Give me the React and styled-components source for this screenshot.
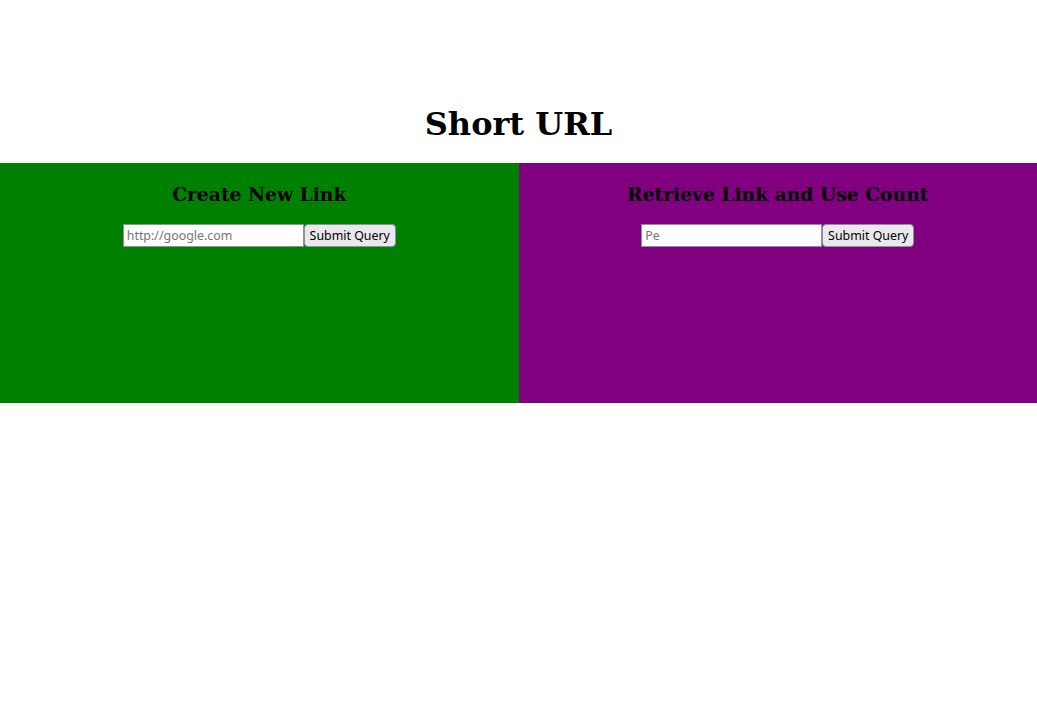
import React from "react";
import styled, { createGlobalStyle } from "styled-components";

const Global = createGlobalStyle`
  body { margin: 0; font-family: "DejaVu Serif", serif; background: #fff; }
`;

const Header = styled.header`
  padding-top: 105px;
  text-align: center;
`;

const Title = styled.h1`
  margin: 0 0 20.44px;
  font-size: 32px;
  font-weight: bold;
`;

const Panels = styled.div`
  display: flex;
`;

const Panel = styled.section`
  flex: 1 1 0;
  height: 240px;
  background: ${(p) => p.$bg};
  text-align: center;
`;

const PanelTitle = styled.h3`
  font-size: 18.72px;
  margin: 19.72px 0 18.72px;
`;

const Form = styled.form`
  margin: 0;
  display: flex;
  justify-content: center;
`;

const TextInput = styled.input`
  box-sizing: border-box;
  width: 181px;
  height: 23px;
  margin: 0;
  padding: 0 3px;
  border: 1px solid #8f8f9d;
  border-radius: 0;
  background: #fff;
  font-family: "Noto Sans", sans-serif;
  font-size: 12.4px;
  color: #000;
  &::placeholder { color: #757575; }
`;

const SubmitButton = styled.button`
  box-sizing: border-box;
  width: 92px;
  height: 23px;
  margin: 0;
  padding: 0 4px;
  border: 1px solid #8f8f9d;
  border-radius: 4px;
  background: #e9e9ed;
  font-family: "Noto Sans", sans-serif;
  font-size: 12.4px;
  color: #000;
  white-space: nowrap;
`;

export default function App() {
  return (
    <>
      <Global />
      <Header>
        <Title>Short URL</Title>
      </Header>
      <Panels>
        <Panel $bg="green">
          <PanelTitle>Create New Link</PanelTitle>
          <Form onSubmit={(e) => e.preventDefault()}>
            <TextInput type="text" placeholder="http://google.com" />
            <SubmitButton type="submit">Submit Query</SubmitButton>
          </Form>
        </Panel>
        <Panel $bg="purple">
          <PanelTitle>Retrieve Link and Use Count</PanelTitle>
          <Form onSubmit={(e) => e.preventDefault()}>
            <TextInput type="text" placeholder="Pe" />
            <SubmitButton type="submit">Submit Query</SubmitButton>
          </Form>
        </Panel>
      </Panels>
    </>
  );
}
